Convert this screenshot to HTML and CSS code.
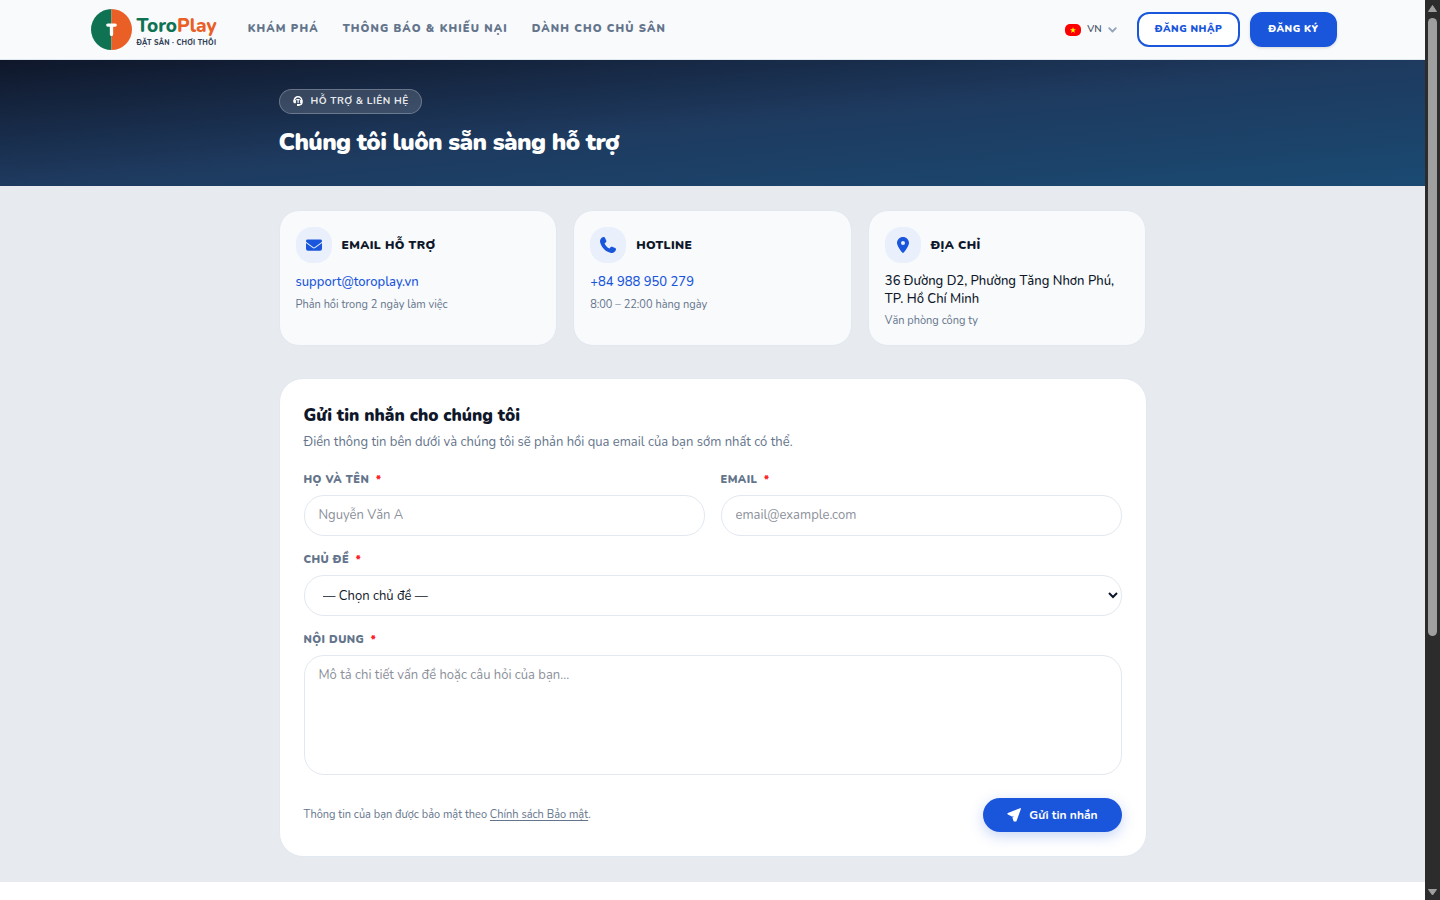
FILE: index.html
```html
<!DOCTYPE html>
<html lang="vi">
<head>
<meta charset="utf-8">
<meta name="viewport" content="width=device-width, initial-scale=1">
<title>ToroPlay - Hỗ trợ &amp; Liên hệ</title>
<link rel="stylesheet" href="styles.css">
</head>
<body>
<div class="page">
  <header class="header">
    <div class="header-inner">
      <a class="logo" href="#" aria-label="ToroPlay">
        <svg class="logo-mark" viewBox="0 0 42 42" aria-hidden="true">
          <path d="M21 0a21 21 0 0 0 0 42z" fill="#0f7253"/>
          <path d="M21 0a21 21 0 0 1 0 42z" fill="#e95f25"/>
          <path d="M17.200 16.500h7.600M21 16.500v9.500" fill="none" stroke="#fff" stroke-width="3.400" stroke-linecap="round"/>
        </svg>
        <span class="logo-text">
          <span class="logo-name">Toro<span class="logo-accent">Play</span></span>
          <span class="logo-tag">ĐẶT SÂN · CHƠI THÔI</span>
        </span>
      </a>
      <nav class="nav">
        <a href="#">KHÁM PHÁ</a>
        <a href="#">THÔNG BÁO &amp; KHIẾU NẠI</a>
        <a href="#">DÀNH CHO CHỦ SÂN</a>
      </nav>
      <div class="actions">
        <button class="lang" type="button">
          <svg class="flag" viewBox="0 0 16 12" aria-hidden="true"><rect width="16" height="12" rx="5" fill="#f00"/><path d="M8 3l.75 2.200h2.350L9.200 6.600l.7 2.300L8 7.500 6.100 8.900l.7-2.300-1.900-1.400h2.350z" fill="#ff0"/></svg>
          <span>VN</span>
          <svg class="chevron" viewBox="0 0 9 6" aria-hidden="true"><path d="M1.200 1.200l3.300 3.300 3.300-3.300" fill="none" stroke="#94a3b8" stroke-width="1.800" stroke-linecap="round" stroke-linejoin="round"/></svg>
        </button>
        <button class="btn btn-outline" type="button">ĐĂNG NHẬP</button>
        <button class="btn btn-solid" type="button">ĐĂNG KÝ</button>
      </div>
    </div>
  </header>

  <section class="hero">
    <div class="container">
      <span class="pill">
        <svg viewBox="0 0 10 10" aria-hidden="true"><path d="M1.300 6V4.500a3.700 3.700 0 0 1 7.400 0V7a1.800 1.800 0 0 1-1.800 1.800H5" fill="none" stroke="#fff" stroke-width="1.600"/><path d="M.5 4h2.400v3.200H1.500a1 1 0 0 1-1-1zM7.100 4h2.400v2.200a1 1 0 0 1-1 1H7.100zM3.300 3h3.400v1.300H5.700V7H4.500V4.300H3.300zM4 8h2.500v1.900H4z" fill="#fff"/></svg>
        HỖ TRỢ &amp; LIÊN HỆ
      </span>
      <h1>Chúng tôi luôn sẵn sàng hỗ trợ</h1>
    </div>
  </section>

  <main class="main">
    <div class="container stack">
      <div class="cards">
        <article class="card">
          <div class="card-head">
            <span class="card-icon"><svg viewBox="0 0 16 16" aria-hidden="true"><path d="M1.500 2.500h13A1.500 1.500 0 0 1 15.400 5.200l-6.800 5a1 1 0 0 1-1.200 0l-6.800-5A1.500 1.500 0 0 1 1.500 2.500zM0 6l6.800 5.100a2 2 0 0 0 2.400 0L16 6v5.700a2 2 0 0 1-2 2H2a2 2 0 0 1-2-2z" fill="#1a56db"/></svg></span>
            <h2>EMAIL HỖ TRỢ</h2>
          </div>
          <a class="card-link" href="mailto:support@toroplay.vn">support@toroplay.vn</a>
          <p class="card-note">Phản hồi trong 2 ngày làm việc</p>
        </article>
        <article class="card">
          <div class="card-head">
            <span class="card-icon"><svg viewBox="0 0 512 512" aria-hidden="true"><path d="M160.200 25C152.300 6.100 131.700-3.900 112.100 1.400l-5.500 1.500c-64.600 17.600-119.800 80.200-103.700 156.400 37.100 175 174.800 312.700 349.800 349.800 76.300 16.200 138.800-39.100 156.400-103.700l1.500-5.500c5.400-19.700-4.700-40.300-23.500-48.100l-97.300-40.500c-16.500-6.900-35.600-2.100-47 11.800l-38.600 47.200C233.900 335.400 177.300 277 144.800 205.300L189 169.300c13.900-11.300 18.600-30.400 11.800-47L160.200 25z" fill="#1a56db"/></svg></span>
            <h2>HOTLINE</h2>
          </div>
          <a class="card-link" href="tel:+84988950279">+84 988 950 279</a>
          <p class="card-note">8:00 – 22:00 hàng ngày</p>
        </article>
        <article class="card">
          <div class="card-head">
            <span class="card-icon"><svg viewBox="-64 0 512 512" aria-hidden="true"><path d="M215.700 499.200C267 435 384 279.400 384 192 384 86 298 0 192 0S0 86 0 192c0 87.400 117 243 168.300 307.200 12.300 15.300 35.100 15.300 47.400 0zM192 128a64 64 0 1 1 0 128 64 64 0 1 1 0-128z" fill="#1a56db"/></svg></span>
            <h2>ĐỊA CHỈ</h2>
          </div>
          <p class="card-text">36 Đường D2, Phường Tăng Nhơn Phú,<br>TP. Hồ Chí Minh</p>
          <p class="card-note">Văn phòng công ty</p>
        </article>
      </div>

      <form class="form">
        <h2 class="form-title">Gửi tin nhắn cho chúng tôi</h2>
        <p class="form-lead">Điền thông tin bên dưới và chúng tôi sẽ phản hồi qua email của bạn sớm nhất có thể.</p>
        <div class="form-row">
          <div class="field">
            <label for="name">HỌ VÀ TÊN <span class="req">*</span></label>
            <input id="name" type="text" placeholder="Nguyễn Văn A">
          </div>
          <div class="field">
            <label for="email">EMAIL <span class="req">*</span></label>
            <input id="email" type="email" placeholder="email@example.com">
          </div>
        </div>
        <div class="field">
          <label for="topic">CHỦ ĐỀ <span class="req">*</span></label>
          <select id="topic"><option>— Chọn chủ đề —</option></select>
        </div>
        <div class="field">
          <label for="message">NỘI DUNG <span class="req">*</span></label>
          <textarea id="message" placeholder="Mô tả chi tiết vấn đề hoặc câu hỏi của bạn..."></textarea>
        </div>
        <div class="form-foot">
          <p>Thông tin của bạn được bảo mật theo <a href="#">Chính sách Bảo mật</a>.</p>
          <button class="send" type="submit">
            <svg viewBox="0 -32 576 576" aria-hidden="true"><path d="M536.400-26.300c9.800-3.500 20.600-1 28 6.300s9.800 18.200 6.300 28l-178 496.900c-5 13.900-18.100 23.100-32.800 23.100h-60c-14.200 0-27-8.600-32.300-21.700l-40-130c-4.500-11-2.500-23.600 5.200-32.600l60-60-60 30c-9.100 7.600-21.600 9.600-32.600 5.200L38.100 236.800c-13.100-5.300-21.700-18.100-21.700-32.300 0-14.700 9.200-27.800 23.100-32.800l496.900-198z" fill="#fff"/></svg>
            Gửi tin nhắn
          </button>
        </div>
      </form>
    </div>
  </main>
</div>
<div class="scrollbar" aria-hidden="true">
  <svg viewBox="0 0 15 16"><path d="M7.500 5.500L11.500 11.500H3.500z" fill="#9f9f9f" stroke="#9f9f9f" stroke-linejoin="round"/></svg>
  <span class="track"><span class="thumb"></span></span>
  <svg viewBox="0 0 15 16"><path d="M7.500 11L11.500 5.500H3.500z" fill="#9f9f9f" stroke="#9f9f9f" stroke-linejoin="round"/></svg>
</div>
</body>
</html>
```
FILE: styles.css
```css
* { box-sizing: border-box; }

body {
  margin: 0;
  display: flex;
  min-height: 100vh;
  background: #fff;
  color: #0f172a;
  font-family: Nunito, "Open Sans", "Noto Sans", sans-serif;
  font-size: 13px;
  line-height: 18px;
}

h1, h2, p { margin: 0; }
a { color: inherit; text-decoration: none; }
button, input, select, textarea { font: inherit; color: inherit; margin: 0; }
button { cursor: pointer; border: 0; padding: 0; background: none; }
svg { display: block; flex: none; }

.page { flex: 1; min-width: 0; }

.header { background: #f8fafc; border-bottom: 1px solid #e2e8f0; }
.header-inner {
  display: flex;
  align-items: center;
  max-width: 1280px;
  height: 59px;
  margin: 0 auto;
  padding: 0 16px;
}
.logo { display: flex; align-items: center; gap: 5px; margin: 0 31px 0 2px; }
.logo-mark { width: 41px; height: 41px; }
.logo-text { display: flex; flex-direction: column; gap: 3px; padding-top: 3px; white-space: nowrap; }
.logo-name { color: #0f7253; font-size: 19px; line-height: 20px; font-weight: 800; }
.logo-accent { color: #e95f25; }
.logo-tag { color: #334155; font-size: 7px; line-height: 8px; font-weight: 800; letter-spacing: .04em; }

.nav { display: flex; gap: 24px; padding-bottom: 2px; color: #64748b; font-size: 11px; font-weight: 900; letter-spacing: .1em; white-space: nowrap; }
.actions { display: flex; align-items: center; gap: 10px; margin-left: auto; }
.lang { display: flex; align-items: center; gap: 6px; padding-right: 10px; color: #475569; font-size: 10px; font-weight: 600; }
.lang span { padding-bottom: 2px; }
.flag { width: 16px; height: 12px; }
.chevron { width: 9px; height: 6px; }
.btn { height: 35px; padding: 0 16px 2px; border: 2px solid #1a56db; border-radius: 12px; font-size: 10px; font-weight: 900; letter-spacing: .05em; white-space: nowrap; }
.btn-outline { background: #fff; color: #1a56db; }
.btn-solid { background: #1a56db; color: #fff; box-shadow: 0 1px 3px rgba(15, 23, 42, .15); }

.hero { padding: 29px 0; background: linear-gradient(175deg, #0f172a 0%, #1e3a5f 50%, #1a4a72 100%); color: #fff; }
.container { max-width: 900px; margin: 0 auto; padding: 0 16px; }
.hero .container { display: flow-root; }
.pill {
  display: inline-flex;
  align-items: center;
  gap: 8px;
  height: 25px;
  padding: 0 12px 1px 13px;
  border: 1px solid rgba(255, 255, 255, .25);
  border-radius: 13px;
  background: rgba(255, 255, 255, .15);
  color: rgba(255, 255, 255, .9);
  font-size: 10px;
  font-weight: 700;
  letter-spacing: .05em;
  vertical-align: top;
}
.pill svg { width: 10px; height: 10px; }
.hero h1 { margin-top: 14px; font-size: 24px; line-height: 29px; font-weight: 900; letter-spacing: -.025em; }

.main { padding: 24px 0 25px; background: #e7ebf0; }
.stack { display: flex; flex-direction: column; gap: 32px; }
.cards { display: grid; grid-template-columns: repeat(3, 1fr); gap: 16px; }
.card { padding: 16px 16px 15px; border: 1px solid #e2e8f0; border-radius: 20px; background: #f8fafc; }
.card-head { display: flex; align-items: center; gap: 10px; margin-bottom: 9px; }
.card-icon { display: grid; place-items: center; width: 36px; height: 36px; border-radius: 16px; background: #e9f0fb; }
.card-icon svg { width: 16px; height: 16px; }
.card h2 { font-size: 12px; line-height: 18px; font-weight: 900; letter-spacing: .03em; }
.card-link { display: block; padding: 1px 0; color: #1a56db; font-weight: 500; }
.card-text { font-weight: 500; }
.card-note { margin-top: 4px; color: #64748b; font-size: 11px; }

.form { padding: 25px 24px 24px; border: 1px solid #e2e8f0; border-radius: 24px; background: #fff; }
.form-title { font-size: 17px; line-height: 24px; font-weight: 900; }
.form-lead { margin: 5px 0 20px; color: #64748b; }
.form-row { display: grid; grid-template-columns: 1fr 1fr; gap: 16px; }
.field { display: flex; flex-direction: column; gap: 6px; margin-bottom: 15px; }
.field label { color: #64748b; font-size: 11px; font-weight: 900; letter-spacing: .04em; }
.req { margin-left: 3px; color: #ff1f2d; }
.field input, .field select, .field textarea {
  width: 100%;
  height: 41px;
  padding: 0 14px;
  border: 1px solid #e2e8f0;
  border-radius: 20px;
  background: #fff;
}
.field input { padding-bottom: 2px; }
.field textarea { display: block; height: 120px; padding: 10px 14px; resize: none; }
.field ::placeholder { color: #8b909a; }
.form-foot { display: flex; align-items: center; justify-content: space-between; margin-top: 23px; color: #64748b; font-size: 11px; }
.form-foot a { text-decoration: underline; text-underline-offset: 2px; }
.send {
  display: flex;
  align-items: center;
  gap: 8px;
  height: 34px;
  padding: 0 24px;
  border-radius: 17px;
  background: #1a56db;
  color: #fff;
  font-size: 12px;
  font-weight: 700;
  box-shadow: 0 4px 14px rgba(26, 86, 219, .25);
}
.send svg { width: 14px; height: 14px; }

.scrollbar { position: sticky; top: 0; display: flex; flex-direction: column; width: 15px; height: 100vh; background: #2c2c2c; }
.scrollbar svg { width: 15px; height: 16px; }
.track { flex: 1; padding: 2px 3px; }
.thumb { display: block; height: 71.500%; border-radius: 5px; background: #9f9f9f; }
```
